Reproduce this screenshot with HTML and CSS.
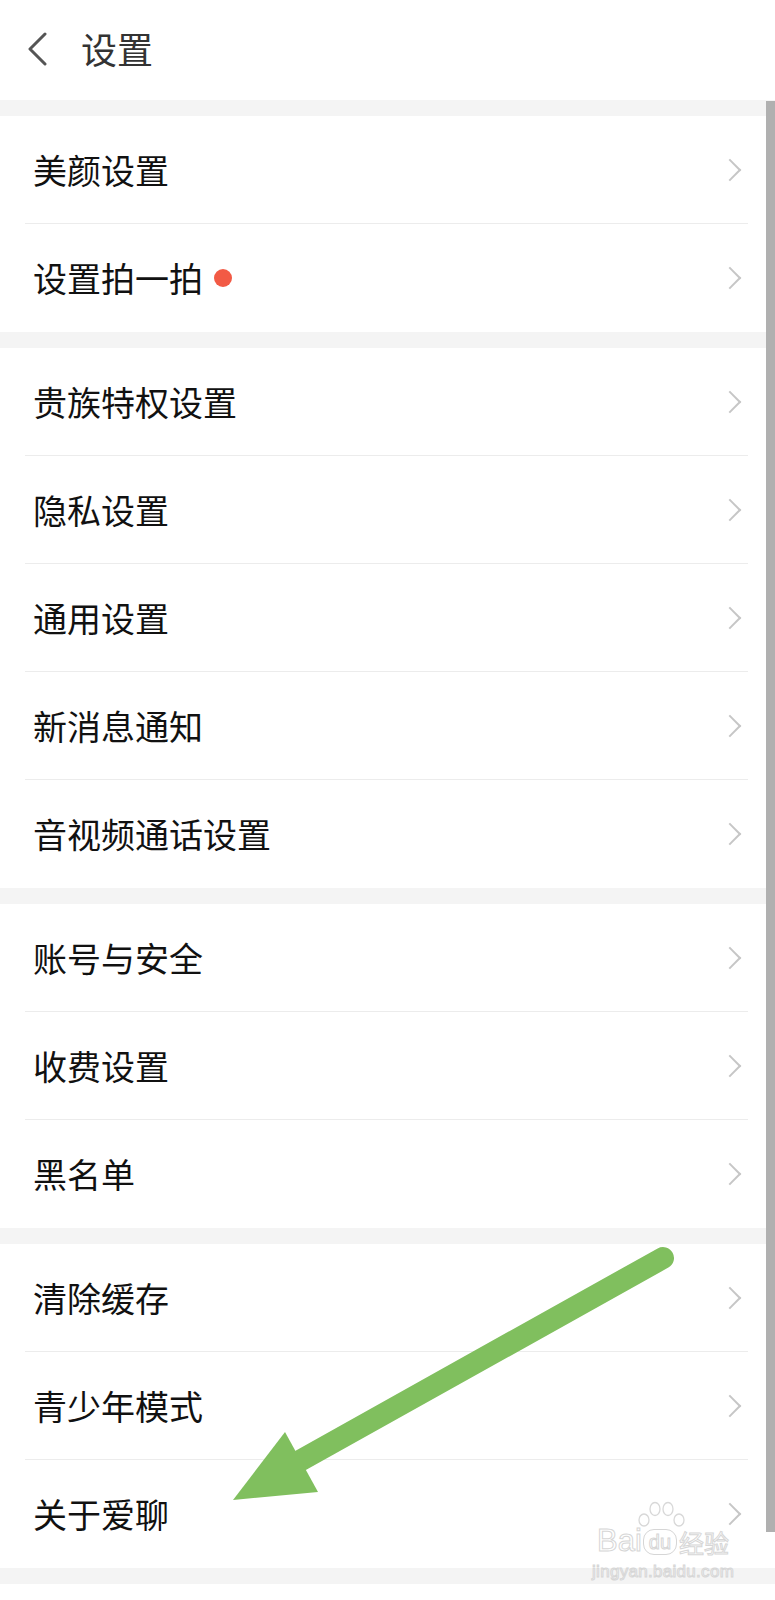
FILE: index.html
```html
<!DOCTYPE html>
<html lang="zh">
<head>
    <meta charset="UTF-8">
    <meta name="viewport" content="width=device-width, initial-scale=1.0">
    <title>设置</title>
    <link rel="stylesheet" href="styles.css">
</head>
<body>

    <div class="page">
        <header class="topbar">
            <svg class="back" width="22" height="34" viewBox="0 0 22 34">
                <path d="M19 2 L4 17 L19 32" fill="none" stroke="#555" stroke-width="3" stroke-linecap="round" stroke-linejoin="round"/>
            </svg>
            <h1>设置</h1>
        </header>

        <div class="list">
            <section class="group">
                <div class="row"><span>美颜设置</span><i class="chev"></i></div>
                <div class="row"><span>设置拍一拍</span><b class="dot"></b><i class="chev"></i></div>
            </section>
            <section class="group">
                <div class="row"><span>贵族特权设置</span><i class="chev"></i></div>
                <div class="row"><span>隐私设置</span><i class="chev"></i></div>
                <div class="row"><span>通用设置</span><i class="chev"></i></div>
                <div class="row"><span>新消息通知</span><i class="chev"></i></div>
                <div class="row"><span>音视频通话设置</span><i class="chev"></i></div>
            </section>
            <section class="group">
                <div class="row"><span>账号与安全</span><i class="chev"></i></div>
                <div class="row"><span>收费设置</span><i class="chev"></i></div>
                <div class="row"><span>黑名单</span><i class="chev"></i></div>
            </section>
            <section class="group">
                <div class="row"><span>清除缓存</span><i class="chev"></i></div>
                <div class="row"><span>青少年模式</span><i class="chev"></i></div>
                <div class="row"><span>关于爱聊</span><i class="chev"></i></div>
            </section>
        </div>

        <!-- 滚动条 -->
        <div class="scrollbar"></div>

        <!-- 标注箭头 -->
        <svg class="arrow" width="775" height="1600" viewBox="0 0 775 1600">
            <line x1="663" y1="1258" x2="296" y2="1463" stroke="#80bf5e" stroke-width="22" stroke-linecap="round"/>
            <polygon points="233,1500 285,1432 318,1492" fill="#80bf5e"/>
        </svg>

        <!-- 水印 -->
        <div class="watermark">
            <div class="wm-top">
                <span class="wm-en">Bai</span>
                <span class="wm-du">
                    <svg class="paw" width="50" height="30" viewBox="0 0 50 30">
                        <ellipse cx="8" cy="20" rx="5" ry="6" fill="none" stroke="#d8d8d8" stroke-width="1.3"/>
                        <ellipse cx="19" cy="9" rx="5" ry="6.5" fill="none" stroke="#d8d8d8" stroke-width="1.3"/>
                        <ellipse cx="32" cy="9" rx="5" ry="6.5" fill="none" stroke="#d8d8d8" stroke-width="1.3"/>
                        <ellipse cx="43" cy="20" rx="5" ry="6" fill="none" stroke="#d8d8d8" stroke-width="1.3"/>
                    </svg>
                    du
                </span>
                <span class="wm-cn">经验</span>
            </div>
            <div class="wm-url">jingyan.baidu.com</div>
        </div>
    </div>

</body>
</html>
```

FILE: styles.css
```css
body {
    margin: 0;
    background: #fff;
    font-family: "Noto Sans CJK SC", "Noto Sans", sans-serif;
    color: #111;
}
.page {
    position: relative;
    width: 775px;
    height: 1600px;
    overflow: hidden;
}
.topbar {
    height: 100px;
    display: flex;
    align-items: center;
    padding-left: 26px;
    box-sizing: border-box;
}
.topbar .back {
    margin-top: -3px;
}
.topbar h1 {
    margin: 0 0 0 33px;
    font-size: 36px;
    font-weight: normal;
    color: #333;
    line-height: 1;
    margin-top: -4px;
}
.list {
    background: #f4f4f4;
    padding: 16px 0;
    display: flex;
    flex-direction: column;
    gap: 16px;
}
.group {
    background: #fff;
}
.row {
    height: 108px;
    box-sizing: border-box;
    margin: 0 27px 0 25px;
    padding: 0 4px 0 8px;
    display: flex;
    align-items: center;
    border-bottom: 1px solid #ececec;
    font-size: 34px;
}
.row:last-child {
    border-bottom: none;
}
.row span {
    line-height: 1;
}
.dot {
    width: 18px;
    height: 18px;
    border-radius: 50%;
    background: #f25a45;
    margin-left: 11px;
}
.chev {
    margin-left: auto;
    width: 14px;
    height: 14px;
    border-top: 2.5px solid #c6c6c6;
    border-right: 2.5px solid #c6c6c6;
    transform: rotate(45deg);
    margin-right: 6px;
}
.scrollbar {
    position: absolute;
    left: 766px;
    top: 101px;
    width: 9px;
    height: 1431px;
    background: #b0b0b0;
}
.arrow {
    position: absolute;
    left: 0;
    top: 0;
    pointer-events: none;
}
.watermark {
    position: absolute;
    left: 592px;
    top: 1522px;
    width: 150px;
    font-family: "Liberation Sans", "Noto Sans CJK SC", sans-serif;
    color: rgba(255, 255, 255, 0.6);
    -webkit-text-stroke: 1px #d6d6d6;
}
.wm-top {
    display: flex;
    align-items: flex-end;
    height: 34px;
    padding-left: 5px;
}
.wm-en {
    font-size: 31px;
    line-height: 1;
}
.wm-du {
    position: relative;
    font-size: 20px;
    line-height: 1;
    border: 1px solid #d6d6d6;
    border-radius: 11px;
    padding: 2px 5px;
    margin: 0 2px 1px 1px;
}
.paw {
    position: absolute;
    left: -8px;
    top: -30px;
}
.wm-cn {
    font-family: "Noto Sans CJK SC", sans-serif;
    font-size: 25px;
    line-height: 1;
    margin-bottom: 1px;
}
.wm-url {
    margin-top: 7px;
    font-size: 17px;
    letter-spacing: 0.3px;
    line-height: 1;
}
```
